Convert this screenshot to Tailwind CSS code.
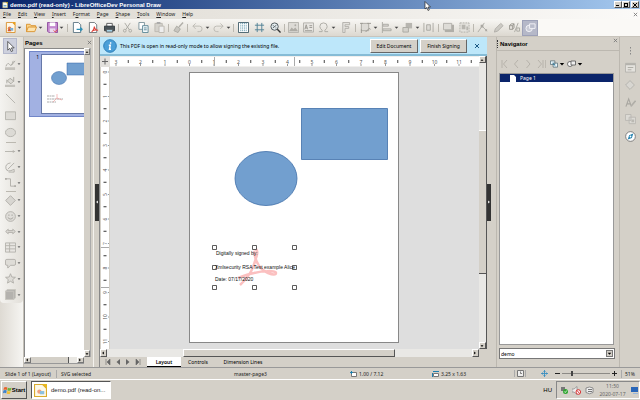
<!DOCTYPE html>
<html lang="en">

<head>
  <meta charset="UTF-8" />
  <meta name="viewport" content="width=device-width, initial-scale=1.0" />
  <title>demo.pdf (read-only) - LibreOfficeDev Personal Draw</title>
  <script src="https://cdn.jsdelivr.net/npm/@tailwindcss/browser@4"></script>
</head>

<body class="h-screen overflow-hidden flex flex-col bg-[#d4d0c8] text-black font-['Noto_Sans',sans-serif] text-[5px] leading-[8px] select-none">
  <!-- icon set -->
  <svg class="hidden">
    <symbol id="doc" viewBox="0 0 12 12"><path d="M1.500.5H8L11 3.500v8H1.500z" fill="#fffbe8" stroke="#b8a858" /><path d="M7.500 0H11.500V4z" fill="#e8c020" /><path d="M3 6h6v3H3z" fill="#7ab0d8" /></symbol>
    <symbol id="new" viewBox="0 0 12 12"><path d="M1.500.5H8L11 3.500v8H1.500z" fill="#fff8e8" stroke="#d9922e" /><path d="M7.500 0H11.500V4z" fill="#e8a020" /><circle cx="5" cy="7" r="2" fill="#e08050" /><path d="M5.500 6.500h3.500v3H5.500z" fill="#7ab0d8" /><path d="M3 9l2-2 2 3H3z" fill="#d05a38" /></symbol>
    <symbol id="open" viewBox="0 0 12 12"><path d="M.5 10.500v-8h4l1 1.500h5v2" fill="#fbd48a" stroke="#d9922e" /><path d="M.5 10.500l2-5h9l-2 5z" fill="#fde3ae" stroke="#d9922e" /></symbol>
    <symbol id="save" viewBox="0 0 12 12"><path d="M.5.500h11v11H2l-1.500-1.500z" fill="#c58ad0" stroke="#8c4a9c" /><path d="M3 .5h6v4H3z" fill="#fff" /><path d="M3 7h6v4.500H3z" fill="#eadcf0" /><path d="M7 9l2 2 2.500-3" stroke="#e05050" fill="none" /></symbol>
    <symbol id="export" viewBox="0 0 12 12"><path d="M1.500.5h5.500L9.500 3v8.500h-8z" fill="#fff" stroke="#5a7482" /><path d="M5 8h6M9 6l2 2-2 2" fill="none" stroke="#2c8fb5" stroke-width="1.300" /></symbol>
    <symbol id="pdf" viewBox="0 0 12 12"><path d="M1.500.5h5.500L9.500 3v8.500h-8z" fill="#fff" stroke="#6a7478" /><path d="M7 5c0 3-2 5-3 6M7 5c0 3 2 4 4 4M5 9.500c2-1 4-1 6-.5" fill="none" stroke="#e0433a" stroke-width="1.200" /></symbol>
    <symbol id="print" viewBox="0 0 12 12"><path d="M3 1.500h6V5H3z" fill="#fff" stroke="#555" /><path d="M.5 4.500h11v5H.5z" fill="#4a5358" stroke="#353c40" /><path d="M2.500 8h7v3h-7z" fill="#a8d4e8" stroke="#555" /></symbol>
    <symbol id="cut" viewBox="0 0 12 12"><path d="M3 1l5 7.500M9 1L4 8.500" fill="none" stroke="#aaa8a2" /><circle cx="3" cy="9.500" r="1.500" fill="none" stroke="#aaa8a2" /><circle cx="9" cy="9.500" r="1.500" fill="none" stroke="#aaa8a2" /></symbol>
    <symbol id="copy" viewBox="0 0 12 12"><path d="M1 .5h6v7.500H1z" fill="#fff" stroke="#789199" /><path d="M5 4h6v7.500H5z" fill="#f4fafc" stroke="#5b8796" /><path d="M6.500 6.500h3M6.500 8.500h3" stroke="#5b8796" /></symbol>
    <symbol id="paste" viewBox="0 0 12 12"><path d="M1 1.500h8v9H1z" fill="#d4d2cc" stroke="#bbb8b0" /><path d="M5.500 4.500h5.500v7H5.500z" fill="#eee" stroke="#bbb8b0" /><path d="M3 1h4" stroke="#aaa" stroke-width="2" /></symbol>
    <symbol id="brush" viewBox="0 0 12 12"><path d="M11 .5L6.500 5.500" stroke="#b0aea8" stroke-width="1.500" /><path d="M4 4.500l4 3-2.500 4-4.500-2z" fill="#c8c6c0" stroke="#aaa8a2" /></symbol>
    <symbol id="undo" viewBox="0 0 12 12"><path d="M4 1.500L1 4.500l3 3M1 4.500h7q3 0 3 3t-3 3H6" fill="none" stroke="#bbb9b2" /></symbol>
    <symbol id="redo" viewBox="0 0 12 12"><path d="M8 1.500l3 3-3 3M11 4.500H4q-3 0-3 3t3 3h2" fill="none" stroke="#bbb9b2" /></symbol>
    <symbol id="grid" viewBox="0 0 12 12"><path d="M.5.500h11v11H.5z" fill="#fff" stroke="#3d5a66" /><path d="M3 1v10M5 1v10M7 1v10M9 1v10" stroke="#4a8aa0" stroke-dasharray="1 1" /></symbol>
    <symbol id="guides" viewBox="0 0 12 12"><path d="M1 3.500h10M1 8.500h10M3.500 1v10M8.500 1v10" stroke="#4f7f94" /></symbol>
    <symbol id="zoom" viewBox="0 0 12 12"><circle cx="5" cy="5" r="4" fill="#e6eef0" stroke="#4a5358" /><path d="M8 8l3.500 3.500" stroke="#333" stroke-width="1.500" /><path d="M3 6.500l4-3M3 4h1M6 6.500h1" stroke="#4a5358" /></symbol>
    <symbol id="image" viewBox="0 0 12 12"><path d="M.5.500h11v11H.5z" fill="#dddbd6" stroke="#b4b2ac" /><path d="M1 10l3-4 2 2 2-2 3 4z" fill="#aeaca6" /><circle cx="8" cy="3.500" r="1" fill="#aeaca6" /></symbol>
    <symbol id="textbox" viewBox="0 0 12 12"><path d="M.5 1h11v10H.5z" fill="#e8e6e2" stroke="#b0aea8" /><path d="M2 8l1.500-5L5 8M2.500 6.500h2M7 4h3M7 6h3M2 9.500h8" fill="none" stroke="#98968f" /></symbol>
    <symbol id="omega" viewBox="0 0 12 12"><path d="M1 10.500h3.500V9Q2 7 2 5q0-4 4-4t4 4q0 2-2.500 4v1.500H11" fill="none" stroke="#aaa8a2" /></symbol>
    <symbol id="fontwork" viewBox="0 0 12 12"><path d="M3 .5h7.500V3H5.500v2h4v2h-4v4.500H3z" fill="#e4e2dd" stroke="#b0aea8" /></symbol>
    <symbol id="transform" viewBox="0 0 12 12"><path d="M1.500 1.500h8v8h-8z" fill="#dddbd6" stroke="#aaa8a2" /><path d="M0 1.500h3M8 1.500h4M1.500 8v4M6 11l4-4 1.500 1" fill="none" stroke="#98968f" /></symbol>
    <symbol id="align" viewBox="0 0 12 12"><path d="M1.500 0v12" stroke="#aaa8a2" /><path d="M2 2.500h6v2H2zM2 7.500h9v2H2z" fill="#dddbd6" stroke="#aaa8a2" /></symbol>
    <symbol id="arrange" viewBox="0 0 12 12"><path d="M4 1h7v6H4z" fill="#b8b6b0" /><path d="M1 6h6v5H1z" fill="#d4d2cc" stroke="#aaa8a2" /></symbol>
    <symbol id="distribute" viewBox="0 0 12 12"><path d="M1 1v10M11 1v10M4 3h4v6H4z" fill="#dddbd6" stroke="#aaa8a2" /></symbol>
    <symbol id="shadow" viewBox="0 0 12 12"><path d="M2 3h10v8H2z" fill="#b0aea8" /><path d="M.5 1.500h9v7h-9z" fill="#dedcd7" stroke="#b0aea8" /></symbol>
    <symbol id="crop" viewBox="0 0 12 12"><path d="M1 1h10v10H1z" fill="#e4e2dd" stroke="#b0aea8" stroke-dasharray="2 1" /><path d="M3 3h4v5H3zM8 5h2v4H8z" fill="#b8b6b0" /></symbol>
    <symbol id="points" viewBox="0 0 12 12"><path d="M1 11L8 1M5 4l6 6" stroke="#aaa8a2" fill="none" /><path d="M4 3h3v3H4zM9 8h2v2H9z" fill="#aaa8a2" /></symbol>
    <symbol id="glue" viewBox="0 0 12 12"><path d="M1.500 11l1-3.500L8.500 1.500 11 4l-6 6z" fill="#cccac4" stroke="#b0aea8" /></symbol>
    <symbol id="extrude" viewBox="0 0 12 12"><path d="M.5 4l2-2h3v4L4 8H.5zM.5 4H4v4M4 4l1.500-2" fill="#e4e2dd" stroke="#98968f" /><path d="M6 11l4-10" stroke="#aaa8a2" /><path d="M8.500 6.500h3V10h-3z" fill="none" stroke="#aaa8a2" /></symbol>
    <symbol id="shapes" viewBox="0 0 12 12"><circle cx="4.500" cy="7" r="3.500" fill="#c9cbd6" stroke="#f4f4f8" /><path d="M5 2h6v5H5z" fill="#b9bccb" stroke="#f4f4f8" /></symbol>
    <symbol id="pointer" viewBox="0 0 12 12"><path d="M3 .5v9.500l2.300-2 1.500 3.500 1.700-.8L7 7.500h3z" fill="#fff" stroke="#444" stroke-width=".9" /></symbol>
    <symbol id="linecolor" viewBox="0 0 12 12"><path d="M0 9h11v3H0z" fill="#c4c2bc" /><path d="M1 8Q3 3 5 6t4-4M7 7l4-5" fill="none" stroke="#aaa8a2" /></symbol>
    <symbol id="fillcolor" viewBox="0 0 12 12"><path d="M0 9.500h11v2.500H0z" fill="#c4c2bc" /><path d="M5.500 2.500l4 3-3 3-4-3zM2 4v4M9.500 1v5" fill="#dddbd6" stroke="#aaa8a2" /></symbol>
    <symbol id="line" viewBox="0 0 12 12"><path d="M1 1l10 10" stroke="#b4b2ac" /></symbol>
    <symbol id="rect" viewBox="0 0 12 12"><path d="M.5 2h11v8.500H.5z" fill="#dcdad5" stroke="#b4b2ac" /></symbol>
    <symbol id="ellipse" viewBox="0 0 12 12"><ellipse cx="6" cy="6" rx="5.500" ry="4.500" fill="#dcdad5" stroke="#b4b2ac" /></symbol>
    <symbol id="arrowline" viewBox="0 0 12 12"><path d="M0 6h11M9 4.500v3" fill="none" stroke="#b4b2ac" /></symbol>
    <symbol id="curve" viewBox="0 0 12 12"><path d="M6 1Q0 2 1 7t9 1M3 8l7-7M10 8v3H4" fill="none" stroke="#b0aea8" /></symbol>
    <symbol id="connector" viewBox="0 0 12 12"><path d="M0 2h6v8h6" fill="none" stroke="#b0aea8" /><path d="M0 1h2v2H0zM10 9h2v2h-2z" fill="#b0aea8" /></symbol>
    <symbol id="diamond" viewBox="0 0 12 12"><path d="M6 .7L11.300 6 6 11.300.7 6z" fill="#d8d6d1" stroke="#b0aea8" /></symbol>
    <symbol id="smile" viewBox="0 0 12 12"><circle cx="6" cy="6" r="5.300" fill="#e0deda" stroke="#b0aea8" /><path d="M3 7q3 3.500 6 0M3.500 4.500h1.500M7 4.500h1.500" fill="none" stroke="#a09e98" /></symbol>
    <symbol id="blockarrow" viewBox="0 0 12 12"><path d="M.7 6L3.500 3.500V5h5V3.500L11.300 6 8.500 8.500V7h-5v1.500z" fill="#dcdad5" stroke="#b0aea8" /></symbol>
    <symbol id="table" viewBox="0 0 12 12"><path d="M.5 1h11v10H.5zM.5 4h11M5 1v10M.5 7.500h11" fill="#e8e6e2" stroke="#b4b2ac" /></symbol>
    <symbol id="callout" viewBox="0 0 12 12"><path d="M2 1.500h8q1.500 0 1.500 1.500v3.500Q11.500 8 10 8H6l-3 3V8H2Q.5 8 .5 6.500V3Q.5 1.500 2 1.500z" fill="#dedcd7" stroke="#b0aea8" /></symbol>
    <symbol id="star" viewBox="0 0 12 12"><path d="M6 .8l1.500 3.600 3.900.3-3 2.500.9 3.800L6 9l-3.300 2 .9-3.800-3-2.500 3.900-.3z" fill="#dedcd7" stroke="#b0aea8" /></symbol>
    <symbol id="cube" viewBox="0 0 12 12"><path d="M.5 2.500l2-2h9v9l-2 2h-9z" fill="#b4b2ae" stroke="#c8c6c0" /><path d="M9.500 2.500v9M.5 2.500h9" stroke="#c6c4be" /></symbol>
    <symbol id="down" viewBox="0 0 6 6"><path d="M.8 2h4.400L3 4.600z" fill="currentColor" /></symbol>
    <symbol id="up" viewBox="0 0 6 6"><path d="M.8 4.300h4.400L3 1.700z" fill="currentColor" /></symbol>
    <symbol id="left" viewBox="0 0 6 6"><path d="M4.300.8v4.400L1.700 3z" fill="currentColor" /></symbol>
    <symbol id="right" viewBox="0 0 6 6"><path d="M1.700.8v4.400L4.300 3z" fill="currentColor" /></symbol>
    <symbol id="close" viewBox="0 0 6 6"><path d="M1 1l4 4M5 1L1 5" fill="none" stroke="currentColor" /></symbol>
    <symbol id="properties" viewBox="0 0 12 12"><path d="M.5 1.500h11v9.500H.5z" fill="#e4e2dd" stroke="#b4b2ac" /><path d="M1 2.500h10" stroke="#b4b2ac" stroke-width="2" /><path d="M3 6h6M3 8.500h4" stroke="#aaa8a2" /></symbol>
    <symbol id="styles" viewBox="0 0 12 12"><path d="M1 10.500L4 2l3 8.500M2 7.500h4" fill="none" stroke="#a8a6a0" stroke-width="1.200" /><path d="M7 9.500L11.500 4" stroke="#b0aea8" stroke-width="1.800" /></symbol>
    <symbol id="gallery" viewBox="0 0 12 12"><path d="M.5.500h6v6.500h-6zM4.500 3.500h7v7h-7z" fill="#dcdad5" stroke="#bab8b2" /><path d="M7 6h3v3H7z" fill="#bab8b2" /></symbol>
    <symbol id="compass" viewBox="0 0 12 12"><circle cx="6" cy="6" r="5.300" fill="#fff" stroke="#777" /><path d="M9 2.800L7.500 7.500 3 9.200 4.500 4.500z" fill="#1d7fae" /><circle cx="6" cy="6" r="1" fill="#fff" /></symbol>
  </svg>

  <header>
    <div class="flex items-center h-[9px] pl-[2px] pr-px gap-[2px] bg-linear-to-r from-[#0a246a] to-[#a6caf0] text-white">
      <svg class="w-[6px] h-2"><use href="#doc" /></svg>
      <h1 class="flex-1 font-['Liberation_Sans',sans-serif] font-bold text-[6px]">demo.pdf (read-only) - LibreOfficeDev Personal Draw</h1>
      <div class="flex h-[7px] text-black">
        <button aria-label="Minimize" class="w-2 bg-[#d4d0c8] border border-t-white border-l-white border-[#555] flex items-end pl-px pb-px"><span class="w-[3px] h-px bg-black"></span></button>
        <button aria-label="Restore" class="w-2 bg-[#d4d0c8] border border-t-white border-l-white border-[#555] flex items-center justify-center"><span class="size-1 border border-black"></span></button>
        <button aria-label="Close" class="ml-px w-2 bg-[#d4d0c8] border border-t-white border-l-white border-[#555] flex items-center justify-center"><svg class="size-[6px] shrink-0"><use href="#close" /></svg></button>
      </div>
    </div>
    <nav class="flex items-center h-[10px] pl-[3px] pr-[2px] gap-[7px] text-[#222] bg-linear-to-r from-[#dcd8d0] to-[#fbfaf8]">
      <button><u>F</u>ile</button>
      <button><u>E</u>dit</button>
      <button><u>V</u>iew</button>
      <button><u>I</u>nsert</button>
      <button>F<u>o</u>rmat</button>
      <button><u>P</u>age</button>
      <button><u>S</u>hape</button>
      <button><u>T</u>ools</button>
      <button><u>W</u>indow</button>
      <button><u>H</u>elp</button>
      <button aria-label="Close document" class="ml-auto text-[#777]"><svg class="size-[5px]"><use href="#close" /></svg></button>
    </nav>
    <div class="flex h-[18px] bg-[#faf9f6] border-b border-[#c8c4bc]">
      <div id="toolbar" class="flex items-center pl-[3px] rounded-r bg-linear-to-b from-[#f8f7f4] to-[#dcd8d0]"></div>
    </div>
  </header>

  <main class="flex-1 min-h-0 flex">
    <div class="w-6 shrink-0 flex flex-col bg-linear-to-r from-[#dedad3] to-[#f6f5f2] border-r border-[#c4c0b8]">
      <div id="drawbar" class="flex flex-col pl-[3px] bg-linear-to-r from-[#f4f3f0] to-[#e2dfd9] rounded-b"></div>
    </div>

    <!-- page previews -->
    <aside class="w-[69px] shrink-0 flex flex-col">
      <div class="flex items-center justify-between h-[11px] pl-px pr-px">
        <h2 class="font-['Liberation_Sans',sans-serif] font-bold text-[6px]">Pages</h2>
        <button aria-label="Close pages" class="text-[#777]"><svg class="size-[5px]"><use href="#close" /></svg></button>
      </div>
      <div class="flex-1 min-h-0 flex">
        <div class="flex-1 min-w-0 bg-white border-t border-l border-[#888] pt-[2px] pl-1">
          <div class="flex h-[66px] bg-[#a2b1e2] border-y border-l border-[#7186c8]">
            <span class="w-[11px] shrink-0 pr-[2px] pt-px text-right">1</span>
            <div class="flex-1 min-w-0 my-[2px] bg-white border-l border-y border-[#6678a8] overflow-hidden">
              <svg class="w-full h-[61px]">
                <path d="M25 8h26v12H25z" fill="#729fcf" stroke="#3465a4" stroke-width=".5" />
                <ellipse cx="17" cy="23" rx="7.500" ry="6.500" fill="#729fcf" stroke="#3465a4" stroke-width=".5" />
                <path d="M5 41h8M5 44h16M5 47h9" stroke="#888" stroke-width=".7" stroke-dasharray="2 .5" />
                <path d="M15 39v4l5 2M15 43l-4 4" stroke="#f0a0a0" stroke-width=".7" fill="none" />
              </svg>
            </div>
          </div>
        </div>
        <div class="w-[7px] shrink-0 mr-[2px] flex flex-col justify-between bg-[#d4d0c8] border-r border-[#aaa]">
          <button aria-label="Scroll up" class="h-[7px] border border-t-white border-l-white border-[#777]"><svg class="size-1"><use href="#up" /></svg></button>
          <button aria-label="Scroll down" class="h-[7px] border border-t-white border-l-white border-[#777]"><svg class="size-1"><use href="#down" /></svg></button>
        </div>
      </div>
      <div class="flex h-[7px] mb-[3px] mr-[9px] bg-[#e9e7e2] border-b border-[#999]">
        <button aria-label="Scroll left" class="w-[7px] bg-[#d4d0c8] border border-t-white border-l-white border-[#777]"><svg class="size-1"><use href="#left" /></svg></button>
        <div class="w-[38px] bg-[#d4d0c8] border-r border-[#555]"></div>
        <button aria-label="Scroll right" class="ml-auto w-[7px] bg-[#d4d0c8] border border-t-white border-l-white border-[#777]"><svg class="size-1"><use href="#right" /></svg></button>
      </div>
    </aside>
    <div class="w-[7px] shrink-0 flex flex-col justify-center items-end border-l border-[#f4f2ee] border-r border-r-[#888]">
      <button aria-label="Hide pages" class="w-1 h-[37px] bg-[#333] text-white flex items-center"><svg class="size-1"><use href="#left" /></svg></button>
    </div>

    <section class="flex-1 min-w-0 flex flex-col">
      <div class="flex items-center h-[19px] pl-[3px] pr-[7px] bg-[#bde7fa] border-b-2 border-[#86bcd6]">
        <svg class="size-[14px]" viewBox="0 0 14 14"><circle cx="7" cy="7" r="6.300" fill="#4a9fd8" stroke="#2f7fb8" /><path d="M7.600 3.300v1.500M5.800 6.200h1.500l-.8 4h1.500" fill="none" stroke="#fff" stroke-width="1.400" /></svg>
        <p class="flex-1 pl-[3px]">This PDF is open in read-only mode to allow signing the existing file.</p>
        <button class="w-12 h-[14px] bg-[#d4d0c8] border border-t-white border-l-white border-[#666]">Edit Document</button>
        <button class="ml-[2px] w-[47px] h-[14px] bg-[#d4d0c8] border border-t-white border-l-white border-[#666]">Finish Signing</button>
        <button aria-label="Dismiss" class="ml-[7px] text-[#1c5a86]"><svg class="size-[6px]"><use href="#close" /></svg></button>
      </div>
      <div class="flex-1 min-h-0 flex">
        <div class="flex-1 min-w-0 flex flex-col">
          <div class="flex h-[11px] bg-[#f0efed]">
            <svg class="w-[10px] h-[11px] bg-[#e2e0dc]"><path d="M2 5.500h6M5 2.500v6" stroke="#666" /></svg>
            <svg id="hruler" class="flex-1 h-[9px] mt-px bg-white"></svg>
          </div>
          <div class="flex-1 min-h-0 flex">
            <svg id="vruler" class="w-[8px] h-full ml-px mr-px bg-white"></svg>
            <div class="flex-1 min-w-0 bg-[#dedede] pt-[5px] pr-[2px]">
              <svg class="w-[210px] h-[271px] mx-auto bg-white border border-[#888] font-['Liberation_Sans',sans-serif]" fill="#111">
                <path d="M111.500 35.500h86v51h-86z" fill="#729fcf" stroke="#3f6ea8" stroke-width=".8" />
                <ellipse cx="76" cy="105.500" rx="31" ry="27" fill="#729fcf" stroke="#3f6ea8" stroke-width=".8" />
                <path d="M63 176c5-1 5 4 3 9-2 7-4 16-16 27M64 178c1 9 4 18 14 22 5 2 8 2 8 0 0-3-14-2-22 0-6 1-11 3-16 5" fill="none" stroke="#fbc0c0" stroke-width="2.500" />
                <g fill="#fff" stroke="#333" stroke-width=".8">
                  <path d="M22.500 172.500h4v4h-4zM62.500 172.500h4v4h-4zM102.500 172.500h4v4h-4zM22.500 192.500h4v4h-4zM102.500 192.500h4v4h-4zM22.500 212.500h4v4h-4zM62.500 212.500h4v4h-4zM102.500 212.500h4v4h-4z" />
                </g>
                <text x="26" y="182">Digitally signed by:</text>
                <text x="25" y="196">Xmlsecurity RSA Test example Alice</text>
                <text x="25" y="208">Date: 07/17/2020</text>
              </svg>
            </div>
          </div>
          <div class="flex h-2 bg-[#e9e8e5]">
            <button aria-label="Scroll left" class="w-[7px] bg-[#d4d0c8] border border-t-white border-l-white border-[#555]"><svg class="size-1"><use href="#left" /></svg></button>
            <div class="ml-[20%] w-[56%] bg-[#d4d0c8] border border-t-white border-l-white border-[#555]"></div>
            <button aria-label="Scroll right" class="ml-auto w-[7px] bg-[#d4d0c8] border border-t-white border-l-white border-[#555]"><svg class="size-1"><use href="#right" /></svg></button>
          </div>
        </div>
        <div class="w-2 flex flex-col bg-[#e9e8e5] mb-2 border-r border-[#555]">
          <button aria-label="Scroll up" class="h-[7px] bg-[#d4d0c8] border border-t-white border-l-white border-[#555]"><svg class="size-1"><use href="#up" /></svg></button>
          <div class="mt-[67px] h-[144px] bg-[#d4d0c8] border-y border-t-white border-[#555]"></div>
          <button aria-label="Scroll down" class="mt-auto h-[7px] bg-[#d4d0c8] border border-t-white border-l-white border-[#555]"><svg class="size-1"><use href="#down" /></svg></button>
        </div>
      </div>
      <div class="flex items-center h-[10px] pl-[5px]">
        <div class="flex w-[42px] gap-1 text-[#666]">
          <button aria-label="First"><svg class="size-[6px]" viewBox="0 0 6 6"><path d="M1 0v6M5 0v6L2 3z" fill="currentColor" stroke="currentColor" stroke-width=".6" /></svg></button>
          <button aria-label="Previous"><svg class="size-[6px]" viewBox="0 0 6 6"><path d="M5 0v6L1.500 3z" fill="currentColor" /></svg></button>
          <button aria-label="Next"><svg class="size-[6px]" viewBox="0 0 6 6"><path d="M1 0v6l3.500-3z" fill="currentColor" /></svg></button>
          <button aria-label="Last"><svg class="size-[6px]" viewBox="0 0 6 6"><path d="M1 0v6l3-3zM5 0v6" fill="currentColor" stroke="currentColor" stroke-width=".6" /></svg></button>
        </div>
        <button class="w-[34px] h-[10px] bg-white border-b border-black font-semibold">Layout</button>
        <button class="w-[34px]">Controls</button>
        <button class="w-[56px]">Dimension Lines</button>
      </div>
    </section>

    <div class="w-[10px] shrink-0 flex flex-col justify-center border-r border-[#bcb8b0]">
      <button aria-label="Hide sidebar" class="w-1 h-[37px] bg-[#333] text-white flex items-center"><svg class="size-1"><use href="#right" /></svg></button>
    </div>

    <aside class="w-[122px] shrink-0 flex flex-col">
      <div class="flex items-center justify-between h-[13px] pr-px border-b border-[#bcb8b0] mt-px">
        <h2 class="font-['Liberation_Sans',sans-serif] font-bold text-[6px] pl-[2px] border-l border-dotted border-[#333]">Navigator</h2>
        <button aria-label="Close navigator" class="self-start text-[#777]"><svg class="size-[5px]"><use href="#close" /></svg></button>
      </div>
      <div class="flex items-center h-[22px] pl-1 pt-[3px] text-[#b6b2aa]">
        <button aria-label="First page" class="w-3"><svg class="w-[7px] h-2" viewBox="0 0 7 8" fill="none" stroke="currentColor"><path d="M1 0v8M6 0L2.500 4 6 8" /></svg></button>
        <button aria-label="Previous page" class="w-3"><svg class="w-[7px] h-2" viewBox="0 0 7 8" fill="none" stroke="currentColor"><path d="M5 0L1.500 4 5 8" /></svg></button>
        <button aria-label="Next page" class="w-3"><svg class="w-[7px] h-2" viewBox="0 0 7 8" fill="none" stroke="currentColor"><path d="M1.500 0L5 4 1.500 8" /></svg></button>
        <button aria-label="Last page" class="w-[9px] mr-1 border-r border-[#bcb8b0]"><svg class="w-[7px] h-2" viewBox="0 0 7 8" fill="none" stroke="currentColor"><path d="M1 0l3.500 4L1 8M6 0v8" /></svg></button>
        <button aria-label="Drag mode" class="flex items-center w-[17px] text-black"><svg class="w-2 h-2" viewBox="0 0 9 8"><path d="M.5.500h5v4h-5zM3.500 3h5v4.500h-5z" fill="#eaf6fa" stroke="#4a6470" stroke-width=".8" /><path d="M3 3l3 3" stroke="#1d7fae" /></svg><svg class="size-[6px] ml-px"><use href="#down" /></svg></button>
        <button aria-label="Show shapes" class="flex items-center w-[17px] text-black"><svg class="w-[9px] h-2" viewBox="0 0 9 8"><circle cx="3" cy="4" r="2.500" fill="#fff" stroke="#555" stroke-width=".8" /><path d="M4 1h4.500v4H4z" fill="#eee" stroke="#555" stroke-width=".8" /></svg><svg class="size-[6px] ml-px"><use href="#down" /></svg></button>
      </div>
      <ul class="flex-1 ml-[2px] mr-[5px] bg-white border border-[#999]">
        <li class="flex items-center h-2 pl-[10px] gap-1 bg-[#0a246a] text-white"><svg class="w-[6px] h-[7px]" viewBox="0 0 6 7"><path d="M0 0h4l2 2v5H0z" fill="#fff" /></svg>Page 1</li>
      </ul>
      <div class="relative flex mt-[3px] mb-2 ml-[2px] mr-[4px]">
        <select aria-label="Document" class="appearance-none flex-1 h-[11px] px-px bg-white border border-[#777]">
          <option>demo</option>
        </select>
        <svg class="absolute right-[2px] top-[2px] size-[7px] bg-[#d4d0c8] border border-[#777] pointer-events-none"><use href="#down" /></svg>
      </div>
    </aside>
    <div class="w-[21px] shrink-0 flex flex-col items-center pt-[6px] border-l border-[#bcb8b0]">
      <button aria-label="Sidebar settings" class="h-4 text-[#888]"><svg class="w-[3px] h-2" viewBox="0 0 3 8"><path d="M1 0h1v1.500H1zM1 3h1v1.500H1zM1 6h1v1.500H1z" fill="currentColor" /></svg></button>
      <button aria-label="Properties" class="h-[17px]"><svg class="size-[11px]"><use href="#properties" /></svg></button>
      <button aria-label="Shapes" class="h-[18px]"><svg class="size-[10px]"><use href="#diamond" /></svg></button>
      <button aria-label="Styles" class="h-[17px]"><svg class="size-[11px]"><use href="#styles" /></svg></button>
      <button aria-label="Gallery" class="h-[17px]"><svg class="size-[11px]"><use href="#gallery" /></svg></button>
      <button aria-label="Navigator" class="h-[17px]"><svg class="size-[11px]"><use href="#compass" /></svg></button>
    </div>
  </main>

  <footer>
    <div class="flex items-center h-3 pl-[5px] border-t border-[#999] text-[#222] whitespace-nowrap">
      <span class="w-[52px] border-r border-[#aaa]">Slide 1 of 1 (Layout)</span>
      <span class="w-[173px] pl-1">SVG selected</span>
      <span class="flex-1 pl-1">master-page3</span>
      <span class="w-[82px] flex items-center gap-[2px]"><svg class="w-[7px] h-[6px]" viewBox="0 0 7 6"><path d="M1.500 1.500h5v4h-5z" fill="#fff" stroke="#777" /><path d="M0 1.500h3M1.500 0v3" stroke="#1d7fae" /></svg>1.00 / 7.12</span>
      <span class="w-[82px] flex items-center gap-[2px]"><svg class="w-[7px] h-[6px]" viewBox="0 0 7 6"><path d="M1.500 2.500h5v3h-5z" fill="#fff" stroke="#777" /><path d="M1 .5h6M.5 2v4" stroke="#1d7fae" /></svg>3.25 x 1.63</span>
      <span class="w-3 mr-[15px] flex justify-center border-x border-[#aaa]"><svg class="size-[7px]" viewBox="0 0 7 7"><path d="M.5.500h6v6h-6z" fill="#eee" stroke="#777" /><path d="M3.500 1.500v2H5" fill="none" stroke="#555" stroke-width=".7" /></svg></span>
      <button aria-label="Fit page" class="mr-[7px]"><svg class="size-[7px]" viewBox="0 0 7 7"><path d="M3.500 0v7M0 3.500h7M2.500 1.500h2M2.500 5.500h2M1.500 2.500v2M5.500 2.500v2" stroke="#3a8fc0" stroke-width=".9" /></svg></button>
      <button aria-label="Zoom out" class="mr-[2px]"><svg class="w-[5px] h-[5px]"><path d="M0 2.500h5" stroke="#222" /></svg></button>
      <input aria-label="Zoom" type="range" value="20" class="appearance-none w-[48px] h-[5px] bg-linear-to-b from-transparent from-40% via-[#444] via-40% to-transparent to-60% [&::-webkit-slider-thumb]:appearance-none [&::-webkit-slider-thumb]:w-[2px] [&::-webkit-slider-thumb]:h-[5px] [&::-webkit-slider-thumb]:bg-[#444]" />
      <button aria-label="Zoom in" class="ml-[2px] mr-[4px]"><svg class="w-[5px] h-[5px]"><path d="M0 2.500h5M2.500 0v5" stroke="#222" /></svg></button>
      <span class="w-[19px] pl-[3px] border-l border-[#aaa]">51%</span>
    </div>
    <div class="flex items-center h-[21px] pl-px border-t border-white font-['Liberation_Sans',sans-serif] text-[6px]">
      <button class="flex items-center justify-center w-[26px] h-[18px] border border-t-white border-l-white border-[#555] font-bold"><svg class="size-[9px]" viewBox="0 0 9 9"><path d="M1 1.500q2-1 3.300 0L3.800 4Q2 3.200.500 4z" fill="#e8622c" /><path d="M4.800 1.800q1.700.8 3.700 0L7.800 4.500q-2 .8-3.500-.2z" fill="#6fb23c" /><path d="M.4 4.500q1.700-.8 3.300 0L3.200 7.200Q1.500 6.500 0 7.200z" fill="#3c82cc" /><path d="M4.200 4.900q1.600.9 3.500.1L7 7.800q-1.700.6-3.300-.3z" fill="#f3bf32" /></svg>Start</button>
      <button class="ml-1 flex items-center gap-1 w-[80px] h-[18px] pl-[2px] bg-white border border-[#555] border-b-white border-r-white text-[#222] whitespace-nowrap"><svg class="size-[13px] shrink-0" viewBox="0 0 12 12"><path d="M.5.500H8l3.500 3.500v7.500H.5z" fill="#fdf8e6" stroke="#d9ab2e" /><path d="M7.500 0H12v4.500z" fill="#e8b820" /><circle cx="5" cy="7" r="2" fill="#f0a080" /><path d="M5.500 6.500h4v3H5.500z" fill="#8cc0e0" /></svg>demo.pdf (read-on...</button>
      <span class="ml-auto">HU</span>
      <div class="ml-1 flex items-center w-[84px] h-[18px] pl-[3px] pr-px gap-1 border border-t-[#888] border-l-[#888] border-white text-[#666] text-[5px]">
        <svg class="size-2 shrink-0" viewBox="0 0 8 8"><path d="M1 1h4v4H1z" fill="#777" /><circle cx="5.500" cy="5.500" r="2.500" fill="#2fa52f" /><path d="M4.300 5.500l1 1 1.500-2" fill="none" stroke="#fff" stroke-width=".8" /></svg>
        <svg class="size-[9px] shrink-0" viewBox="0 0 9 9"><path d="M0 3h2l3-2.500v8L2 6H0z" fill="#eee" stroke="#888" stroke-width=".7" /><circle cx="6.300" cy="6" r="2.300" fill="#fff" stroke="#d83030" /><path d="M5 4.500l2.600 3" stroke="#d83030" /></svg>
        <svg class="size-[9px] shrink-0" viewBox="0 0 9 9"><path d="M1 2Q4.500 0 8 2v4.500Q4.500 9 1 6.500z" fill="#eee" stroke="#777" stroke-width=".8" /><path d="M3 3.500h4M3 5.500h4" stroke="#777" /></svg>
        <time class="flex-1 text-center whitespace-nowrap font-['Noto_Sans',sans-serif]">11:50<br />2020-07-17</time>
        <svg class="w-[7px] h-[7px] shrink-0" viewBox="0 0 7 7"><path d="M0 0h7v5H0z" fill="#2a66b8" /><path d="M2 6.500h5" stroke="#9ab8dc" /></svg>
      </div>
    </div>
  </footer>

  <!-- mouse pointer -->
  <svg class="fixed left-[424px] top-px w-[7px] h-[10px] pointer-events-none" viewBox="0 0 7 10"><path d="M1 .5v7.500l1.800-1.500L4 9.500l1.300-.6L4 6h2.500z" fill="#fff" stroke="#222" stroke-width=".7" /></svg>

  <script>
    // [icon, button width, width of dropdown arrow]; '|' is a separator
    const tools = [
      ['new', 14, 7], ['open', 14, 7], ['save', 14, 7], ['|', 3],
      ['export', 16], ['pdf', 16], ['print', 16], ['|', 2],
      ['cut', 16], ['copy', 16], ['paste', 16], ['|', 3],
      ['brush', 16], ['|', 3], ['undo', 16, 5], ['redo', 16, 5], ['|', 4],
      ['grid', 16], ['guides', 16], ['zoom', 16], ['|', 3],
      ['image', 15], ['textbox', 15], ['omega', 15, 7], ['fontwork', 15], ['|', 4],
      ['transform', 16, 5], ['align', 16, 5], ['arrange', 16, 5], ['distribute', 16], ['|', 4],
      ['shadow', 16], ['crop', 16], ['|', 2],
      ['points', 16], ['glue', 16], ['extrude', 16], ['shapes', 16]
    ]
    document.getElementById('toolbar').innerHTML = tools.map(([icon, width, arrow]) => {
      if (icon === '|') return `<span class="flex justify-center" style="width:${width}px"><i class="w-px h-2 bg-[#bbb8b0]"></i></span>`
      const active = icon === 'shapes' ? 'bg-[#b5b8c8] border border-[#9da1b8]' : ''
      return `<button aria-label="${icon}" class="h-4 flex items-center justify-center ${active}" style="width:${width}px"><svg class="size-[11px] shrink-0"><use href="#${icon}" /></svg></button>` +
        (arrow ? `<button aria-label="${icon} options" class="text-[#444]" style="width:${arrow}px"><svg class="size-[5px]"><use href="#down" /></svg></button>` : '')
    }).join('')

    const draw = [
      ['pointer', 18], ['linecolor', 18, 1], ['fillcolor', 17, 1], ['line', 17], ['rect', 17], ['ellipse', 17], ['|', 2],
      ['arrowline', 16, 1], ['curve', 16, 1], ['connector', 15, 1], ['|', 2],
      ['diamond', 16, 1], ['smile', 16, 1], ['blockarrow', 15, 1], ['table', 16, 1], ['callout', 16, 1], ['star', 15, 1], ['cube', 17, 1]
    ]
    document.getElementById('drawbar').innerHTML = draw.map(([icon, height, arrow]) => {
      if (icon === '|') return `<span class="flex items-center pl-[3px]" style="height:${height}px"><i class="w-[10px] h-px bg-[#bbb8b0]"></i></span>`
      const active = icon === 'pointer' ? 'bg-[#cdd0dd] border border-[#b4b8cc]' : ''
      return `<div class="flex items-center" style="height:${height}px"><button aria-label="${icon}" class="w-[14px] h-4 flex items-center justify-center ${active}"><svg class="size-[11px] shrink-0"><use href="#${icon}" /></svg></button>` +
        (arrow ? `<button aria-label="${icon} options" class="text-[#666]"><svg class="size-1"><use href="#down" /></svg></button>` : '') + '</div>'
    }).join('')

    // rulers, one inch is 24.5 px at this zoom
    const inch = 24.5
    let h = '', v = ''
    for (let i = -3; i <= 11; i++) {
      const x = 79.5 + i * inch
      h += `<text x="${x}" y="6.500" text-anchor="middle" fill="#555">${Math.abs(i)}</text><path d="M${x} 7v2" stroke="#999"/><path d="M${x + inch / 2} 3v3" stroke="#444"/>`
    }
    for (let i = 0; i <= 11; i++) {
      const y = 5 + i * inch
      v += `<text transform="translate(6 ${y}) rotate(-90)" text-anchor="middle" fill="#555">${i}</text><path d="M7 ${y}h2" stroke="#999"/><path d="M2.500 ${y + inch / 2}h3" stroke="#333"/>`
    }
    document.getElementById('hruler').innerHTML = h + '<path d="M104.500 0v9M184.500 0v9" stroke="#aaa"/>'
    document.getElementById('vruler').innerHTML = v + '<path d="M0 180.500h8M0 220.500h8" stroke="#aaa"/>'
  </script>
</body>

</html>
